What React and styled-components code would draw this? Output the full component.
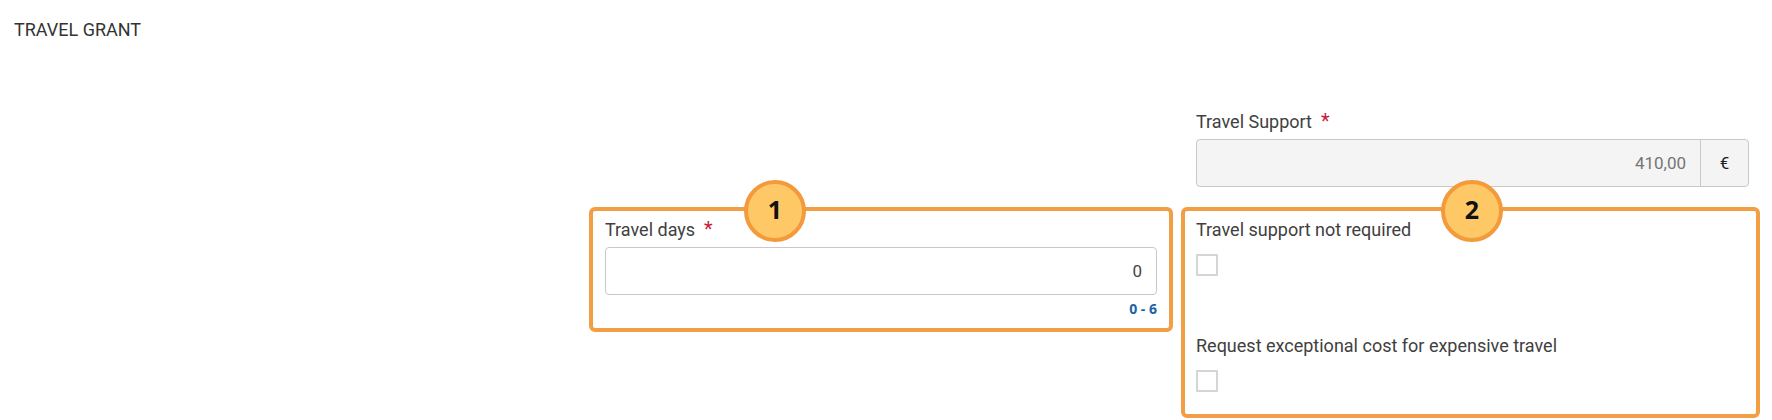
import React from "react";
import styled, { createGlobalStyle } from "styled-components";

const GlobalStyle = createGlobalStyle`
  body {
    margin: 0;
    background: #fff;
    font-family: Roboto, "Liberation Sans", sans-serif;
  }
`;

const Page = styled.div`
  width: 1772px;
  padding-top: 20px;
`;

const SectionTitle = styled.h2`
  margin: 0 0 0 14px;
  font: 400 18px/20px Roboto, sans-serif;
  color: #333;
  text-transform: uppercase;
`;

const FormGrid = styled.div`
  display: grid;
  grid-template-columns: 581px 584px 579px;
  column-gap: 8px;
  row-gap: 20px;
  align-items: start;
  margin-top: 72px;
`;

const Field = styled.div`
  grid-column: ${(p) => p.col};
  padding: ${(p) => p.pad || "0"};
`;

const Label = styled.div`
  font: 400 18px/20px Roboto, sans-serif;
  color: #404040;
  margin-bottom: ${(p) => p.gap || 7}px;
`;

const Required = styled.span`
  color: #c8193c;
  font-size: 20px;
  line-height: 0;
  margin-left: 9px;
`;

const InputGroup = styled.div`
  display: flex;
  height: 48px;
  box-sizing: border-box;
  border: 1px solid #c9c9c9;
  border-radius: 4px;
  background: ${(p) => (p.disabled ? "#f4f4f4" : "#fff")};
  overflow: hidden;
`;

const Input = styled.input`
  flex: 1;
  min-width: 0;
  border: 0;
  outline: none;
  background: transparent;
  padding: 0 14px;
  text-align: right;
  font: 400 17px Roboto, sans-serif;
  color: ${(p) => (p.disabled ? "#757575" : "#444")};
`;

const Addon = styled.div`
  width: 47px;
  display: flex;
  align-items: center;
  justify-content: center;
  border-left: 1px solid #c9c9c9;
  font: 400 17px Roboto, sans-serif;
  color: #222;
`;

const Hint = styled.div`
  margin-top: 6px;
  text-align: right;
  font: 700 14px/16px "Open Sans", sans-serif;
  color: #1f63a6;
`;

const Callout = styled.div`
  position: relative;
  grid-column: ${(p) => p.col};
  border: 4px solid #f29e45;
  border-radius: 6px;
  padding: ${(p) => p.pad};
`;

const Badge = styled.div`
  position: absolute;
  top: -31px;
  left: ${(p) => p.x}px;
  width: 62px;
  height: 62px;
  box-sizing: border-box;
  border: 4px solid #f29a3c;
  border-radius: 50%;
  background: #fec866;
  display: flex;
  align-items: center;
  justify-content: center;
  font: 700 25px/1 "Open Sans", sans-serif;
  color: #111;
  padding-bottom: 3px;
`;

const CheckField = styled.div`
  & + & {
    margin-top: 60px;
  }
`;

const Checkbox = styled.input.attrs({ type: "checkbox" })`
  appearance: none;
  display: block;
  margin: 0;
  width: 22px;
  height: 22px;
  box-sizing: border-box;
  border: 2px solid #d5d5d5;
  border-radius: 1px;
  background: #fff;
`;

export default function App() {
  return (
    <Page>
      <GlobalStyle />
      <SectionTitle>Travel Grant</SectionTitle>
      <FormGrid>
        <Field col={3} pad="0 11px 0 15px">
          <Label>
            Travel Support<Required>*</Required>
          </Label>
          <InputGroup disabled>
            <Input disabled value="410,00" readOnly />
            <Addon>€</Addon>
          </InputGroup>
        </Field>

        <Callout col={2} pad="9px 12px 11px 12px">
          <Badge x={151}>1</Badge>
          <Label>
            Travel days<Required>*</Required>
          </Label>
          <InputGroup>
            <Input value="0" readOnly />
          </InputGroup>
          <Hint>0 - 6</Hint>
        </Callout>

        <Callout col={3} pad="9px 12px 22px 11px">
          <Badge x={256}>2</Badge>
          <CheckField>
            <Label gap={14}>Travel support not required</Label>
            <Checkbox />
          </CheckField>
          <CheckField>
            <Label gap={14}>Request exceptional cost for expensive travel</Label>
            <Checkbox />
          </CheckField>
        </Callout>
      </FormGrid>
    </Page>
  );
}
